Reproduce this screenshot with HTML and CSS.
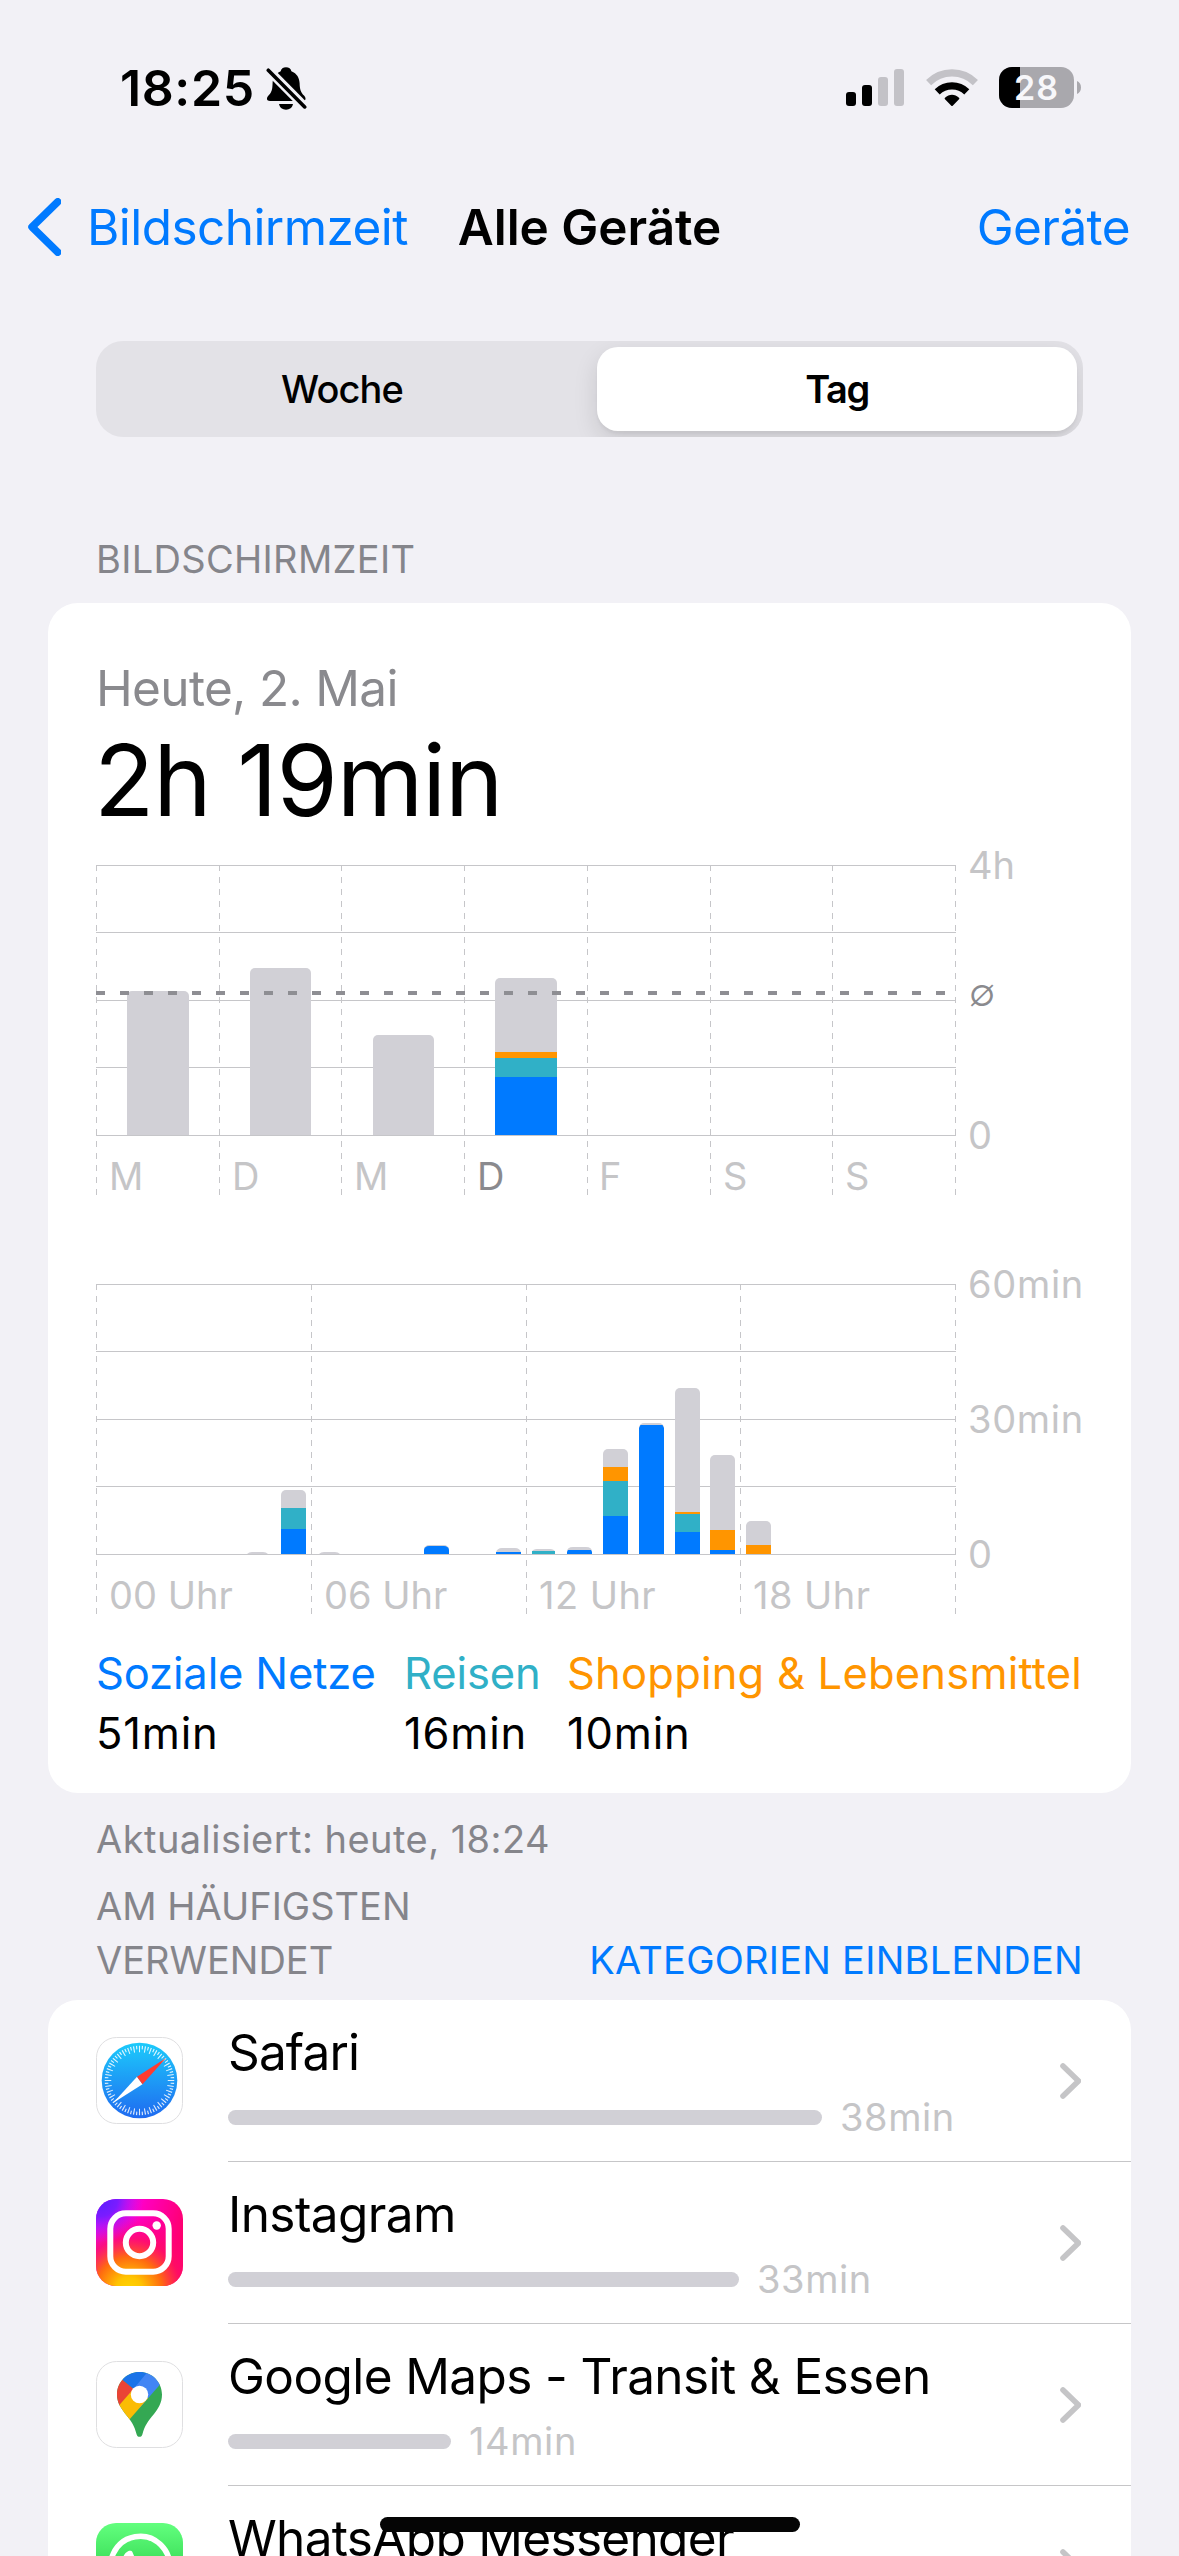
FILE: index.html
```html
<!DOCTYPE html>
<html lang="de">
<head>
<meta charset="utf-8">
<title>Alle Geräte</title>
<link rel="stylesheet" href="styles.css">
</head>
<body>
<div class="screen">
  <header class="status">
    <div class="status-left">
      <span class="time">18:25</span>
      <svg class="bell" width="41" height="44" viewBox="0 -1 41 44">
        <path d="M20 .3c2.900 0 4.900 1.600 5.400 3.900C31 6.400 33.400 11 33.600 16c.2 7 1.400 9.500 4.400 12.500 2.500 2.500 1.800 5.500-1 5.500H4c-3.500 0-4-3-1.500-5.500C6 25 6.400 22 6.600 16 6.800 11 9.500 6.500 14.700 4.200 15.200 1.900 17.100.3 20 .3Z"/>
        <path d="M13 37h14c-.8 3.600-3.400 5.700-7 5.700s-6.200-2.100-7-5.700Z"/>
        <path class="bell-gap" d="M1 1.500 40 41"/>
        <path class="bell-slash" d="M2.300 3.200 38.700 39.900"/>
      </svg>
    </div>
    <div class="status-right">
      <svg width="58" height="38" viewBox="0 0 58 38">
        <rect x="0" y="23" width="10" height="14" rx="3"/>
        <rect x="16" y="16" width="10" height="21" rx="3"/>
        <rect class="dim" x="32" y="8" width="10" height="29" rx="3"/>
        <rect class="dim" x="48" y="0" width="10" height="37" rx="3"/>
      </svg>
      <svg width="52" height="38" viewBox="0 0 52 38">
        <path class="arc arc-dim" d="M2.600 13.600A33 33 0 0 1 49.400 13.600"/>
        <path class="arc" d="M11.200 22.800A21.200 21.200 0 0 1 40.800 22.800"/>
        <path d="M19 30.300a1 1 0 0 1 0-1.500c4.200-4.200 9.800-4.200 14 0a1 1 0 0 1 0 1.500l-6.300 6.400a1 1 0 0 1-1.400 0Z"/>
      </svg>
      <svg width="82" height="42" viewBox="0 0 82 42">
        <rect class="batt" x="0" y="0" width="75" height="41" rx="13"/>
        <path d="M13 0H21V41H13A13 13 0 0 1 0 28V13A13 13 0 0 1 13 0Z"/>
        <path class="batt" d="M78 14c2.500 1 4 3.500 4 6.500s-1.500 5.500-4 6.500Z"/>
        <text class="batt-text" x="37.500" y="33">28</text>
      </svg>
    </div>
  </header>

  <nav class="nav">
    <div class="back">
      <svg width="33" height="58" viewBox="0 0 33 58"><path d="M29.800 3.800 4 29 29.800 54.200"/></svg>
      <span>Bildschirmzeit</span>
    </div>
    <h1 class="title">Alle Geräte</h1>
    <span class="devices">Geräte</span>
  </nav>

  <div class="segments">
    <div class="segment">Woche</div>
    <div class="segment segment-active">Tag</div>
  </div>

  <h2 class="section-label">BILDSCHIRMZEIT</h2>

  <section class="card usage">
    <div class="date">Heute, 2. Mai</div>
    <div class="total">2h 19min</div>

    <svg class="chart" width="1010" height="360" viewBox="0 -25 1010 360">
      <path class="line dashed" d="M.5 0V330M123.500 0V330M245.500 0V330M368.500 0V330M491.500 0V330M614.500 0V330M736.500 0V330M859.500 0V330"/>
      <path class="line" d="M0 .5H860M0 67.500H860M0 135.500H860M0 202.500H860M0 270.500H860"/>
      <path class="other" d="M31 270V131a5 5 0 0 1 5-5H88a5 5 0 0 1 5 5V270Z"/>
      <path class="other" d="M154 270V108a5 5 0 0 1 5-5H210a5 5 0 0 1 5 5V270Z"/>
      <path class="other" d="M277 270V175a5 5 0 0 1 5-5H333a5 5 0 0 1 5 5V270Z"/>
      <path class="other" d="M399 187V118a5 5 0 0 1 5-5H456a5 5 0 0 1 5 5V187Z"/>
      <rect class="shopping" x="399" y="187" width="62" height="6"/>
      <rect class="travel" x="399" y="193" width="62" height="19"/>
      <rect class="social" x="399" y="212" width="62" height="58"/>
      <path class="average" d="M0 128H860"/>
      <text x="13" y="325">M</text>
      <text x="136" y="325">D</text>
      <text x="258" y="325">M</text>
      <text class="today" x="381" y="325">D</text>
      <text x="503" y="325">F</text>
      <text x="627" y="325">S</text>
      <text x="749" y="325">S</text>
      <text x="872" y="14">4h</text>
      <text class="today average-label" x="873" y="140.500">∅</text>
      <text x="872" y="284">0</text>
    </svg>

    <svg class="chart chart-hours" width="1010" height="360" viewBox="0 -24 1010 360">
      <path class="line dashed" d="M.5 0V330M215.500 0V330M430.500 0V330M644.500 0V330M859.500 0V330"/>
      <path class="line" d="M0 .5H860M0 67.500H860M0 135.500H860M0 202.500H860M0 270.500H860"/>
      <path class="other" d="M151 270q2-2 5-2h11q3 0 5 2Z"/>
      <path class="other" d="M185 224V211a5 5 0 0 1 5-5h15a5 5 0 0 1 5 5V224Z"/>
      <rect class="travel" x="185" y="224" width="25" height="21"/>
      <rect class="social" x="185" y="245" width="25" height="25"/>
      <path class="other" d="M223 270q2-2 5-2h11q3 0 5 2Z"/>
      <path class="other" d="M328 270V266a5 5 0 0 1 5-5h15a5 5 0 0 1 5 5V270Z"/>
      <path class="social" d="M328 270V266a5 4 0 0 1 5-4h15a5 4 0 0 1 5 4V270Z"/>
      <path class="other" d="M400 268.500q1-4.500 6-4.500h13q5 0 6 4.500Z"/>
      <rect class="social" x="400" y="268" width="25" height="2"/>
      <path class="other" d="M436 267.500q1-2.500 5-2.500h13q4 0 5 2.500Z"/>
      <rect class="travel" x="436" y="267" width="23" height="3"/>
      <path class="other" d="M471 268q0-5 6-5h13q6 0 6 5Z"/>
      <path class="social" d="M471 270v-2l1-2h23l1 2v2Z"/>
      <path class="other" d="M507 183V170a5 5 0 0 1 5-5h15a5 5 0 0 1 5 5V183Z"/>
      <rect class="shopping" x="507" y="183" width="25" height="14"/>
      <rect class="travel" x="507" y="197" width="25" height="35"/>
      <rect class="social" x="507" y="232" width="25" height="38"/>
      <path class="other" d="M543 270V144a5 5 0 0 1 5-5h15a5 5 0 0 1 5 5V270Z"/>
      <path class="social" d="M543 270V144l1.500-3h22l1.500 3V270Z"/>
      <path class="other" d="M579 228V109a5 5 0 0 1 5-5h15a5 5 0 0 1 5 5V228Z"/>
      <rect class="shopping" x="579" y="228" width="25" height="2"/>
      <rect class="travel" x="579" y="230" width="25" height="18"/>
      <rect class="social" x="579" y="248" width="25" height="22"/>
      <path class="other" d="M614 246V176a5 5 0 0 1 5-5h15a5 5 0 0 1 5 5V246Z"/>
      <rect class="shopping" x="614" y="246" width="25" height="20"/>
      <rect class="social" x="614" y="266" width="25" height="4"/>
      <path class="other" d="M650 261V242a5 5 0 0 1 5-5h15a5 5 0 0 1 5 5V261Z"/>
      <rect class="shopping" x="650" y="261" width="25" height="9"/>
      <text x="13" y="325">00 Uhr</text>
      <text x="228" y="325">06 Uhr</text>
      <text class="late" x="443" y="325">12 Uhr</text>
      <text class="late" x="657" y="325">18 Uhr</text>
      <text class="minutes" x="872" y="14">60min</text>
      <text class="minutes" x="872" y="149">30min</text>
      <text x="872" y="284">0</text>
    </svg>

    <div class="legend">
      <div class="legend-item">
        <div class="legend-name name-social">Soziale Netze</div>
        <div class="legend-value">51min</div>
      </div>
      <div class="legend-item">
        <div class="legend-name name-travel">Reisen</div>
        <div class="legend-value">16min</div>
      </div>
      <div class="legend-item">
        <div class="legend-name name-shopping">Shopping &amp; Lebensmittel</div>
        <div class="legend-value">10min</div>
      </div>
    </div>
  </section>

  <p class="updated">Aktualisiert: heute, 18:24</p>

  <div class="apps-header">
    <h2 class="apps-title">AM HÄUFIGSTEN VERWENDET</h2>
    <span class="apps-link">KATEGORIEN EINBLENDEN</span>
  </div>

  <section class="card apps">
    <div class="app">
      <svg class="app-icon" width="87" height="87" viewBox="0 0 87 87">
        <defs>
          <linearGradient id="safari" x1="0" y1="0" x2="0" y2="1"><stop offset="0" stop-color="#1ccbfb"/><stop offset="1" stop-color="#1f6af0"/></linearGradient>
        </defs>
        <rect class="icon-frame" x=".5" y=".5" width="86" height="86" rx="20"/>
        <circle cx="43.500" cy="43.500" r="37.800" fill="url(#safari)"/>
        <circle class="ticks" cx="43.500" cy="43.500" r="31.500" stroke-width="6.500" pathLength="72" stroke-dasharray=".4 1.600" stroke-dashoffset=".2"/>
        <circle class="ticks" cx="43.500" cy="43.500" r="33" stroke-width="3.500" pathLength="72" stroke-dasharray=".4 1.600" stroke-dashoffset="1.200"/>
        <path fill="#fff" d="M17 66 41 39.800 46.500 47.200Z"/>
        <path fill="#ff3b30" d="M70 21 41 39.800 46.500 47.200Z"/>
      </svg>
      <div class="app-body">
        <div class="app-text">
          <div class="app-name name-safari">Safari</div>
          <div class="app-usage"><span class="bar" style="width:594px"></span>38min</div>
        </div>
        <svg class="chevron" width="21" height="36" viewBox="0 0 21 36"><path d="M3 3 18.500 18 3 33"/></svg>
      </div>
    </div>

    <div class="app">
      <svg class="app-icon" width="87" height="87" viewBox="0 0 87 87">
        <defs>
          <linearGradient id="ig-base" x1="0" y1="0" x2="1" y2=".3"><stop offset="0" stop-color="#e011ff"/><stop offset=".5" stop-color="#ff00c4"/><stop offset="1" stop-color="#ff0070"/></linearGradient>
          <radialGradient id="ig-warm" cx=".38" cy="1.050" r=".85"><stop offset="0" stop-color="#ffd600"/><stop offset=".18" stop-color="#ffc400"/><stop offset=".45" stop-color="#ff6a10"/><stop offset=".7" stop-color="#ff1060" stop-opacity=".75"/><stop offset="1" stop-color="#ff0080" stop-opacity="0"/></radialGradient>
          <radialGradient id="ig-cool" cx=".05" cy="0" r=".5"><stop offset="0" stop-color="#5a1fff"/><stop offset=".4" stop-color="#7a1cff"/><stop offset="1" stop-color="#c812ff" stop-opacity="0"/></radialGradient>
        </defs>
        <rect width="87" height="87" rx="20" fill="url(#ig-base)"/>
        <rect width="87" height="87" rx="20" fill="url(#ig-warm)"/>
        <rect width="87" height="87" rx="20" fill="url(#ig-cool)"/>
        <g class="camera">
          <rect x="14.300" y="14.300" width="58.400" height="58.400" rx="15.500"/>
          <circle cx="43.500" cy="43.500" r="13.700"/>
        </g>
        <circle cx="60.700" cy="26.500" r="4.200" fill="#fff"/>
      </svg>
      <div class="app-body">
        <div class="app-text">
          <div class="app-name name-instagram">Instagram</div>
          <div class="app-usage"><span class="bar" style="width:511px"></span>33min</div>
        </div>
        <svg class="chevron" width="21" height="36" viewBox="0 0 21 36"><path d="M3 3 18.500 18 3 33"/></svg>
      </div>
    </div>

    <div class="app">
      <svg class="app-icon" width="87" height="87" viewBox="0 0 87 87">
        <defs>
          <clipPath id="pin"><path d="M43.500 11C56 11 66 21 66 33.500 66 42 62 48 58 53 52 60 48.500 65 46.500 73 45.800 76.800 41.200 76.800 40.500 73 38.500 65 35.500 60.500 31 55 25 47 21 42 21 33.500 21 21 31 11 43.500 11Z"/></clipPath>
        </defs>
        <rect class="icon-frame" x=".5" y=".5" width="86" height="86" rx="20"/>
        <g clip-path="url(#pin)">
          <rect x="15" y="5" width="60" height="75" fill="#34a853"/>
          <path fill="#4285f4" d="M70 16.600 43.500 47 30 35 60 0H70Z"/>
          <path fill="#1a73e8" d="M15 9.500V0H60.500L37.500 28Z"/>
          <path fill="#ea4335" d="M15 9.500 37.800 28.200 15 54Z"/>
          <path fill="#fbbc04" d="M37.800 27.400 10 59.500V85.500L52 37.200Z"/>
        </g>
        <circle cx="43.500" cy="33.500" r="8.700" fill="#fff"/>
      </svg>
      <div class="app-body">
        <div class="app-text">
          <div class="app-name name-maps">Google Maps - Transit &amp; Essen</div>
          <div class="app-usage"><span class="bar" style="width:223px"></span>14min</div>
        </div>
        <svg class="chevron" width="21" height="36" viewBox="0 0 21 36"><path d="M3 3 18.500 18 3 33"/></svg>
      </div>
    </div>

    <div class="app">
      <svg class="app-icon" width="87" height="87" viewBox="0 0 87 87">
        <defs>
          <linearGradient id="wa" x1="0" y1="0" x2="0" y2="1"><stop offset="0" stop-color="#62ff7e"/><stop offset="1" stop-color="#14bb32"/></linearGradient>
        </defs>
        <rect width="87" height="87" rx="20" fill="url(#wa)"/>
        <path class="bubble" d="M14 73 18.500 57.500A29.500 29.500 0 1 1 29.500 68.500Z"/>
        <path fill="#fff" d="M32.500 28c1.500-.3 3.300-.4 4 1.200l2.800 6.800c.5 1.300-1.800 3.700-2.600 4.900 3.200 5.700 6.300 8.600 12.300 11.200 1.300-1.300 3-4.500 4.300-4l7 3.400c1.500.8 0 5-1.400 6.700-2.600 3-7.200 3.500-11 2.300C38 57 31 50.500 27.200 42c-2-5 0-11.500 5.300-14Z"/>
      </svg>
      <div class="app-body">
        <div class="app-text">
          <div class="app-name name-whatsapp">WhatsApp Messenger</div>
        </div>
        <svg class="chevron" width="21" height="36" viewBox="0 0 21 36"><path d="M3 3 18.500 18 3 33"/></svg>
      </div>
    </div>
  </section>

  <div class="home-indicator"></div>
</div>
</body>
</html>
```

FILE: styles.css
```css
* {
  box-sizing: border-box;
}

body {
  margin: 0;
  background: #f2f1f6;
  color: #000;
  font-family: Inter, "Liberation Sans", sans-serif;
  font-size: 38px;
  line-height: 54px;
}

h1, h2, p {
  margin: 0;
  font: inherit;
}

svg {
  display: block;
  flex: none;
}

.screen {
  position: relative;
  width: 1179px;
  height: 2556px;
  overflow: hidden;
}

/* Status bar */
.status {
  display: flex;
  justify-content: space-between;
  align-items: center;
  height: 176px;
  padding: 0 98px 0 120px;
}

.status-left {
  display: flex;
  align-items: center;
  gap: 11px;
}

.status-right {
  display: flex;
  align-items: center;
  gap: 22px;
}

.status-right svg:last-child {
  margin-left: -1px;
}

.time {
  font-size: 50px;
  font-weight: 600;
  letter-spacing: 0.6px;
}

.bell-gap {
  stroke: #f2f1f6;
  stroke-width: 9;
}

.bell-slash {
  stroke: #000;
  stroke-width: 3.6;
  stroke-linecap: round;
}

.dim {
  fill: #c3c2c7;
}

.arc {
  fill: none;
  stroke: #000;
  stroke-width: 7.2;
}

.arc-dim {
  stroke: #c3c2c7;
}

.batt {
  fill: #a9a8ad;
}

.batt-text {
  fill: #f7f7fa;
  font-size: 34px;
  font-weight: 600;
  text-anchor: middle;
  letter-spacing: 1px;
}

/* Navigation bar */
.nav {
  display: grid;
  grid-template-columns: 1fr auto 1fr;
  align-items: center;
  height: 102px;
  font-size: 49.5px;
  color: #007aff;
}

.back {
  display: flex;
  align-items: center;
  gap: 26px;
  padding-left: 28px;
  letter-spacing: -0.56px;
}

.back path {
  fill: none;
  stroke: #007aff;
  stroke-width: 7.5;
  stroke-linecap: round;
  stroke-linejoin: round;
}

.title {
  color: #000;
  font-weight: 600;
  letter-spacing: -0.05px;
}

.devices {
  justify-self: end;
  padding-right: 49px;
  letter-spacing: -0.59px;
}

/* Segmented control */
.segments {
  display: flex;
  height: 96px;
  margin: 63px 96px 0;
  padding: 6px;
  border-radius: 27px;
  background: #e3e2e7;
  overflow: hidden;
}

.segment {
  flex: 1;
  display: flex;
  align-items: center;
  justify-content: center;
  padding-right: 15px;
  font-weight: 500;
  letter-spacing: -0.9px;
}

.segment-active {
  flex: none;
  width: 480px;
  padding: 0;
  border-radius: 21px;
  background: #fff;
  font-weight: 600;
  letter-spacing: -1.5px;
  box-shadow: 0 9px 24px rgba(0, 0, 0, 0.12), 0 3px 3px rgba(0, 0, 0, 0.04);
}

.section-label {
  margin: 95px 96px 18px;
  color: #85858b;
  letter-spacing: 0.32px;
}

/* Cards */
.card {
  margin: 0 48px;
  border-radius: 30px;
  background: #fff;
}

.usage {
  height: 1190px;
  margin-top: -1px;
  padding: 55px 25px 30px 48px;
}

.date {
  font-size: 49.5px;
  line-height: 60px;
  color: #8a8a8e;
  letter-spacing: -0.68px;
}

.total {
  margin: 2px 0 0 -2px;
  font-size: 99px;
  line-height: 120px;
  letter-spacing: -1.15px;
}

.chart-hours {
  margin-top: 60px;
}

.chart text {
  fill: #c5c5c7;
  font-size: 38px;
}

.chart .today {
  fill: #8a8a8e;
}

.chart .average-label {
  font-weight: 300;
}

.chart .minutes {
  letter-spacing: 0.7px;
}

.chart .late {
  letter-spacing: 0.45px;
}

.line {
  fill: none;
  stroke: #c6c6c9;
  shape-rendering: crispEdges;
}

.dashed {
  stroke-dasharray: 6 6;
}

.average {
  stroke: #8e8e93;
  stroke-width: 4;
  stroke-dasharray: 9 15;
}

.other {
  fill: #d1d0d6;
}

.social {
  fill: #007aff;
}

.travel {
  fill: #30b0c7;
}

.shopping {
  fill: #ff9500;
}

.legend {
  display: grid;
  grid-template-columns: 308px 163px auto;
  margin-top: 23px;
  font-size: 43.5px;
  line-height: 60px;
  white-space: nowrap;
}

.legend-value {
  letter-spacing: 0.8px;
}

.name-social {
  color: #007aff;
  letter-spacing: -0.14px;
}

.name-travel {
  color: #30b0c7;
  letter-spacing: -0.11px;
}

.name-shopping {
  color: #ff9500;
  letter-spacing: 0.2px;
}

.updated {
  margin: 19px 96px 0;
  color: #85858b;
  letter-spacing: 0.46px;
}

/* Most used apps */
.apps-header {
  display: flex;
  justify-content: space-between;
  align-items: flex-end;
  margin: 13px 96px 0;
  padding-bottom: 13px;
  color: #85858b;
}

.apps-title {
  width: 400px;
}

.apps-link {
  color: #007aff;
  letter-spacing: 0.25px;
  white-space: nowrap;
}

.app {
  display: flex;
  gap: 45px;
  height: 162px;
  padding-left: 48px;
}

.app-icon {
  margin-top: 37px;
}

.app-body {
  flex: 1;
  display: flex;
  justify-content: space-between;
  align-items: center;
  padding-right: 50px;
  border-bottom: 1px solid #c6c6c8;
}

.app-text {
  align-self: flex-start;
  padding-top: 22px;
}

.app-name {
  font-size: 49.5px;
  line-height: 60px;
  white-space: nowrap;
}

.name-safari {
  letter-spacing: -0.85px;
}

.name-instagram {
  letter-spacing: -0.59px;
}

.name-maps {
  letter-spacing: -0.6px;
}

.name-whatsapp {
  letter-spacing: -0.68px;
}

.app-usage {
  display: flex;
  align-items: center;
  gap: 18px;
  margin-top: 8px;
  color: #c5c5c7;
  letter-spacing: 0.6px;
}

.bar {
  height: 15px;
  border-radius: 7.5px;
  background: #d1d0d6;
}

.chevron path {
  fill: none;
  stroke: #c5c5c7;
  stroke-width: 5.6;
  stroke-linecap: round;
  stroke-linejoin: round;
}

.icon-frame {
  fill: #fff;
  stroke: #dfdfe1;
}

.ticks {
  fill: none;
  stroke: #fff;
  stroke-opacity: 0.85;
}

.camera {
  fill: none;
  stroke: #fff;
  stroke-width: 6;
}

.bubble {
  fill: none;
  stroke: #fff;
  stroke-width: 5.5;
  stroke-linejoin: round;
}

.home-indicator {
  position: absolute;
  left: 380px;
  bottom: 24px;
  width: 420px;
  height: 15px;
  border-radius: 8px;
  background: #050505;
}
```
